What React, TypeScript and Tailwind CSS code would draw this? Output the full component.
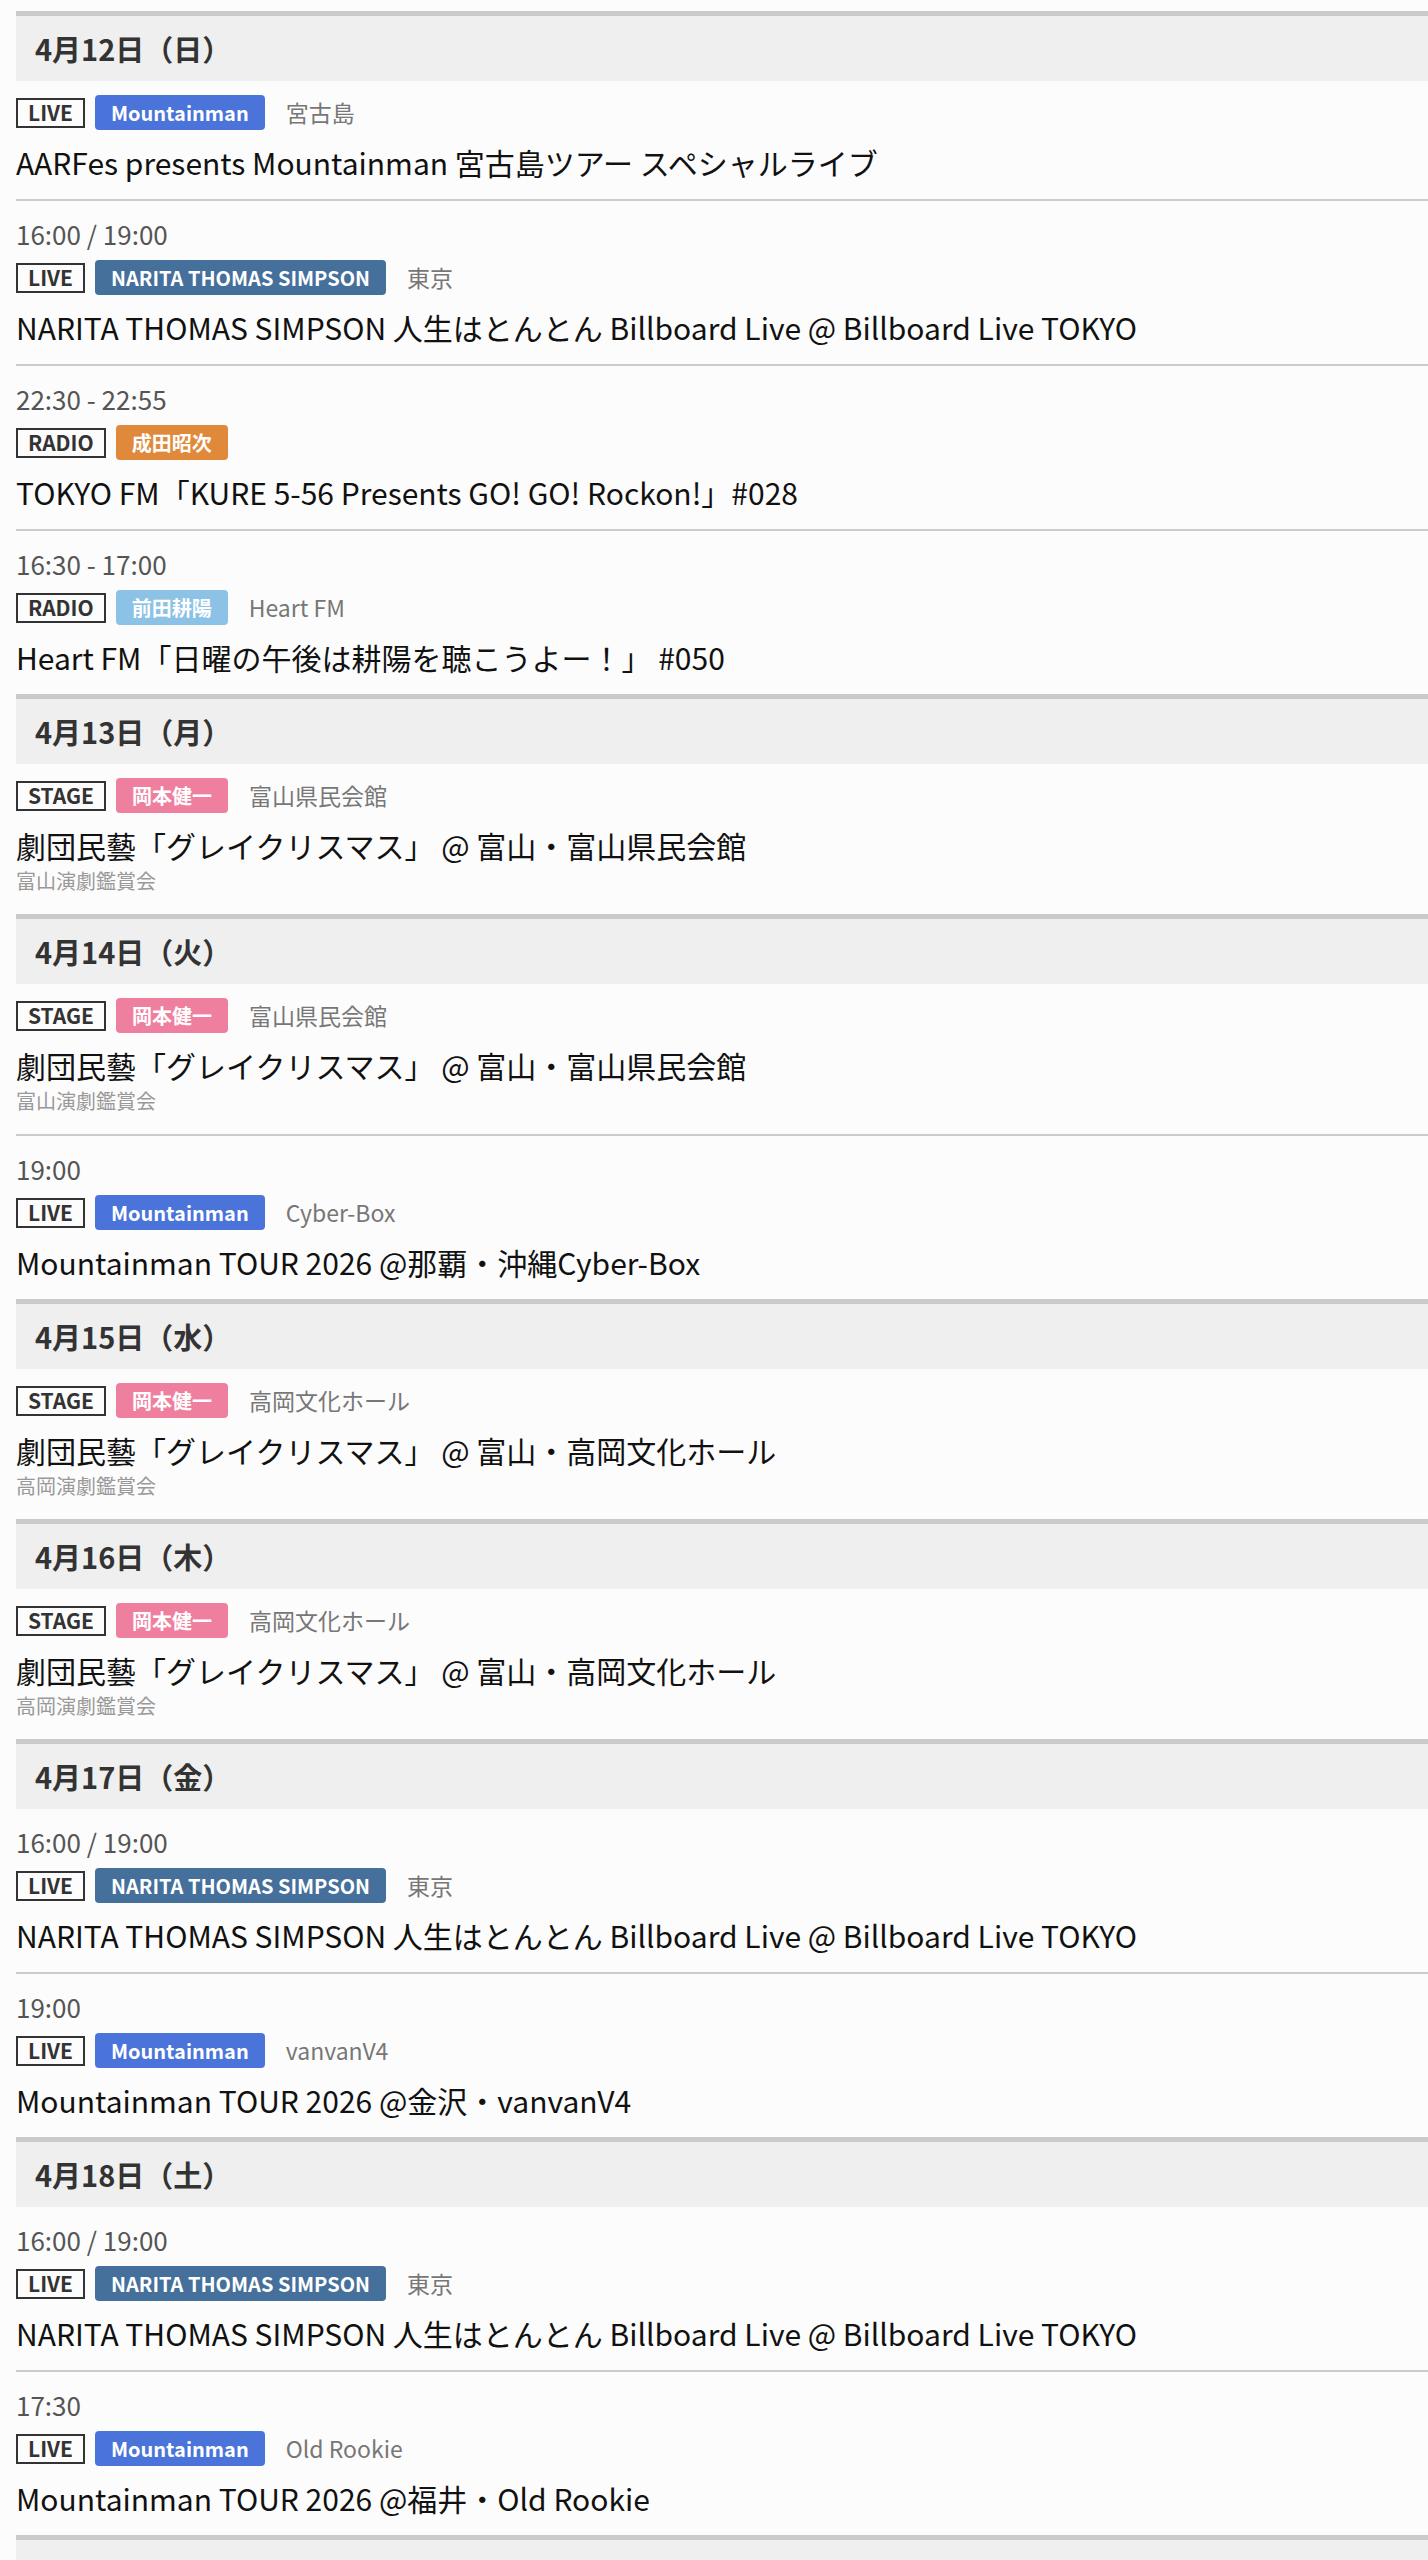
import React from 'react';

type Item = {
  time?: string;
  kind: string;
  artist: string;
  color: string;
  place?: string;
  title: string;
  sub?: string;
};

type Day = { date: string; items: Item[] };

const BLUE = 'bg-[#4a74d9]';
const STEEL = 'bg-[#45709b]';
const ORANGE = 'bg-[#e0893a]';
const SKY = 'bg-[#8cc2e6]';
const PINK = 'bg-[#ee7f9f]';

const nts = 'NARITA THOMAS SIMPSON 人生はとんとん Billboard Live @ Billboard Live TOKYO';

const days: Day[] = [
  {
    date: '4月12日（日）',
    items: [
      { kind: 'LIVE', artist: 'Mountainman', color: BLUE, place: '宮古島', title: 'AARFes presents Mountainman 宮古島ツアー スペシャルライブ' },
      { time: '16:00 / 19:00', kind: 'LIVE', artist: 'NARITA THOMAS SIMPSON', color: STEEL, place: '東京', title: nts },
      { time: '22:30 - 22:55', kind: 'RADIO', artist: '成田昭次', color: ORANGE, title: 'TOKYO FM「KURE 5-56 Presents GO! GO! Rockon!」#028' },
      { time: '16:30 - 17:00', kind: 'RADIO', artist: '前田耕陽', color: SKY, place: 'Heart FM', title: 'Heart FM「日曜の午後は耕陽を聴こうよー！」 #050' },
    ],
  },
  {
    date: '4月13日（月）',
    items: [
      { kind: 'STAGE', artist: '岡本健一', color: PINK, place: '富山県民会館', title: '劇団民藝「グレイクリスマス」 @ 富山・富山県民会館', sub: '富山演劇鑑賞会' },
    ],
  },
  {
    date: '4月14日（火）',
    items: [
      { kind: 'STAGE', artist: '岡本健一', color: PINK, place: '富山県民会館', title: '劇団民藝「グレイクリスマス」 @ 富山・富山県民会館', sub: '富山演劇鑑賞会' },
      { time: '19:00', kind: 'LIVE', artist: 'Mountainman', color: BLUE, place: 'Cyber-Box', title: 'Mountainman TOUR 2026 @那覇・沖縄Cyber-Box' },
    ],
  },
  {
    date: '4月15日（水）',
    items: [
      { kind: 'STAGE', artist: '岡本健一', color: PINK, place: '高岡文化ホール', title: '劇団民藝「グレイクリスマス」 @ 富山・高岡文化ホール', sub: '高岡演劇鑑賞会' },
    ],
  },
  {
    date: '4月16日（木）',
    items: [
      { kind: 'STAGE', artist: '岡本健一', color: PINK, place: '高岡文化ホール', title: '劇団民藝「グレイクリスマス」 @ 富山・高岡文化ホール', sub: '高岡演劇鑑賞会' },
    ],
  },
  {
    date: '4月17日（金）',
    items: [
      { time: '16:00 / 19:00', kind: 'LIVE', artist: 'NARITA THOMAS SIMPSON', color: STEEL, place: '東京', title: nts },
      { time: '19:00', kind: 'LIVE', artist: 'Mountainman', color: BLUE, place: 'vanvanV4', title: 'Mountainman TOUR 2026 @金沢・vanvanV4' },
    ],
  },
  {
    date: '4月18日（土）',
    items: [
      { time: '16:00 / 19:00', kind: 'LIVE', artist: 'NARITA THOMAS SIMPSON', color: STEEL, place: '東京', title: nts },
      { time: '17:30', kind: 'LIVE', artist: 'Mountainman', color: BLUE, place: 'Old Rookie', title: 'Mountainman TOUR 2026 @福井・Old Rookie' },
    ],
  },
  { date: '4月19日（日）', items: [] },
];

const Entry: React.FC<{ item: Item; last: boolean }> = ({ item, last }) => (
  <div className={`pt-[14px] pb-[17px] ${last ? '' : 'border-b-2 border-[#cccccc]'}`}>
    {item.time && (
      <div className="text-[26px] leading-[38px] text-[#555555] mb-[7px]">{item.time}</div>
    )}
    <div className="flex items-center h-[35px]">
      <span className="border-2 border-[#333333] h-[30px] px-[10px] flex items-center text-[21px] font-bold text-[#333333] leading-none">
        {item.kind}
      </span>
      <span
        className={`${item.color} ml-[10px] h-[35px] px-[16px] rounded-[4px] flex items-center text-[20px] font-bold text-white leading-none`}
      >
        {item.artist}
      </span>
      {item.place && <span className="ml-[21px] text-[23px] text-[#777777]">{item.place}</span>}
    </div>
    <div className="mt-3 text-[30px] leading-[40px] text-[#111111]">{item.title}</div>
    {item.sub && <div className="text-[20px] leading-[32px] text-[#999999]">{item.sub}</div>}
  </div>
);

const App: React.FC = () => {
  return (
    <div
      className="min-h-screen bg-[#fcfcfc] pt-[11px] pl-4"
      style={{ fontFamily: '"Noto Sans CJK JP", "Noto Sans", sans-serif' }}
    >
      {days.map((day) => (
        <section key={day.date}>
          <h2 className="border-t-[5px] border-[#cacaca] bg-[#efefef] h-[70px] flex items-center pl-[19px] text-[29px] font-bold text-[#333333]">
            {day.date}
          </h2>
          {day.items.map((item, i) => (
            <Entry key={i} item={item} last={i === day.items.length - 1} />
          ))}
        </section>
      ))}
    </div>
  );
};

export default App;
